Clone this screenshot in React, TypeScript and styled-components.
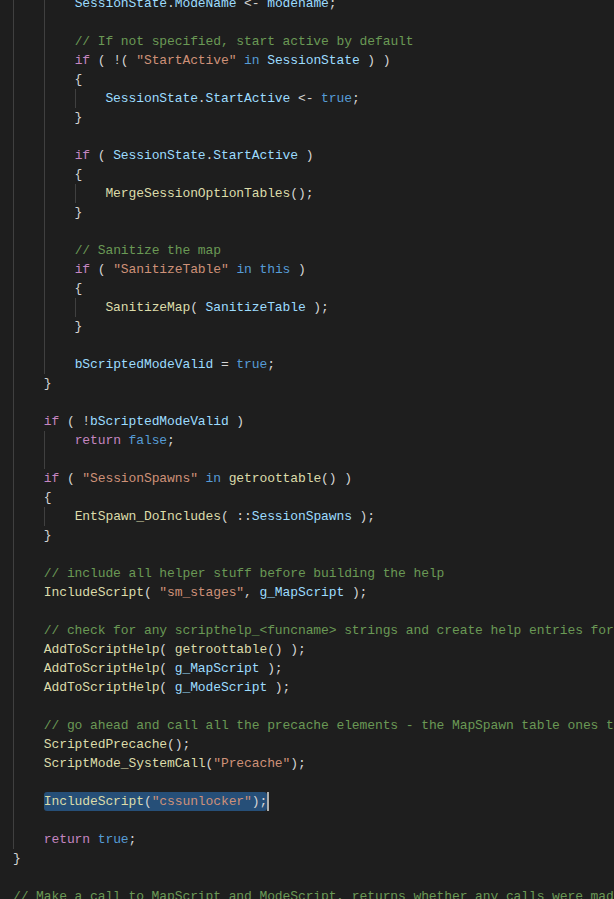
import React from "react";
import styled, { createGlobalStyle } from "styled-components";

const CHAR_W = 7.7;
const GUIDE = "#404040";

const Global = createGlobalStyle`
  html, body {
    margin: 0;
    padding: 0;
    background: #1e1e1e;
    overflow: hidden;
  }
`;

const Editor = styled.div`
  width: 614px;
  height: 899px;
  background: #1e1e1e;
  overflow: hidden;
  font-family: "Liberation Mono", "DejaVu Sans Mono", monospace;
  font-size: 13px;
  letter-spacing: -0.1px;
  color: #d4d4d4;
`;

const Code = styled.div`
  display: flex;
  flex-direction: column;
  margin-top: -6px;
  padding-left: 13px;
`;

const Line = styled.div<{ $guides: number[] }>`
  height: 19px;
  line-height: 19px;
  white-space: pre;
  background: ${(p) =>
    p.$guides.length
      ? p.$guides
          .map(
            (c) =>
              `linear-gradient(${GUIDE}, ${GUIDE}) ${Math.round(c * CHAR_W)}px 0 / 1px 100% no-repeat`
          )
          .join(", ")
      : "none"};
`;

type Kind = "plain" | "comment" | "string" | "control" | "keyword" | "func" | "var";

const COLORS: Record<Kind, string> = {
  plain: "#d4d4d4",
  comment: "#6a9955",
  string: "#ce9178",
  control: "#c586c0",
  keyword: "#569cd6",
  func: "#dcdcaa",
  var: "#9cdcfe",
};

const Tok = styled.span<{ $kind: Kind }>`
  color: ${(p) => COLORS[p.$kind]};
`;

const Selection = styled.span`
  display: inline-block;
  height: 19px;
  line-height: 19px;
  vertical-align: top;
  background: #264f78;
  border-radius: 3px;
`;

const Cursor = styled.span`
  display: inline-block;
  width: 2px;
  height: 19px;
  vertical-align: top;
  background: #aeafad;
`;

const CONTROL = new Set(["if", "return", "else", "while", "for", "foreach"]);
const KEYWORDS = new Set(["in", "this", "true", "false", "null", "local", "function"]);

function tokenize(src: string): { kind: Kind; text: string }[] {
  const out: { kind: Kind; text: string }[] = [];
  let i = 0;
  const push = (kind: Kind, text: string) => {
    const last = out[out.length - 1];
    if (last && last.kind === kind) last.text += text;
    else out.push({ kind, text });
  };
  while (i < src.length) {
    const ch = src[i];
    if (src.startsWith("//", i)) {
      push("comment", src.slice(i));
      break;
    }
    if (ch === '"') {
      let j = i + 1;
      while (j < src.length && src[j] !== '"') j++;
      push("string", src.slice(i, j + 1));
      i = j + 1;
      continue;
    }
    if (/[A-Za-z_]/.test(ch)) {
      let j = i;
      while (j < src.length && /[A-Za-z0-9_]/.test(src[j])) j++;
      const word = src.slice(i, j);
      let kind: Kind = "var";
      if (CONTROL.has(word)) kind = "control";
      else if (KEYWORDS.has(word)) kind = "keyword";
      else if (src[j] === "(") kind = "func";
      push(kind, word);
      i = j;
      continue;
    }
    push("plain", ch);
    i++;
  }
  return out;
}

type LineDef = { text: string; guides: number[]; selected?: boolean };

const L = (text: string, guides: number[], selected = false): LineDef => ({
  text,
  guides,
  selected,
});

const LINES: LineDef[] = [
  L("        SessionState.ModeName <- modename;", [0, 4]),
  L("", [0, 4]),
  L("        // If not specified, start active by default", [0, 4]),
  L('        if ( !( "StartActive" in SessionState ) )', [0, 4]),
  L("        {", [0, 4]),
  L("            SessionState.StartActive <- true;", [0, 4, 8]),
  L("        }", [0, 4]),
  L("", [0, 4]),
  L("        if ( SessionState.StartActive )", [0, 4]),
  L("        {", [0, 4]),
  L("            MergeSessionOptionTables();", [0, 4, 8]),
  L("        }", [0, 4]),
  L("", [0, 4]),
  L("        // Sanitize the map", [0, 4]),
  L('        if ( "SanitizeTable" in this )', [0, 4]),
  L("        {", [0, 4]),
  L("            SanitizeMap( SanitizeTable );", [0, 4, 8]),
  L("        }", [0, 4]),
  L("", [0, 4]),
  L("        bScriptedModeValid = true;", [0, 4]),
  L("    }", [0]),
  L("", [0]),
  L("    if ( !bScriptedModeValid )", [0]),
  L("        return false;", [0, 4]),
  L("", [0, 4]),
  L('    if ( "SessionSpawns" in getroottable() )', [0]),
  L("    {", [0]),
  L("        EntSpawn_DoIncludes( ::SessionSpawns );", [0, 4]),
  L("    }", [0]),
  L("", [0]),
  L("    // include all helper stuff before building the help", [0]),
  L('    IncludeScript( "sm_stages", g_MapScript );', [0]),
  L("", [0]),
  L("    // check for any scripthelp_<funcname> strings and create help entries for them", [0]),
  L("    AddToScriptHelp( getroottable() );", [0]),
  L("    AddToScriptHelp( g_MapScript );", [0]),
  L("    AddToScriptHelp( g_ModeScript );", [0]),
  L("", [0]),
  L("    // go ahead and call all the precache elements - the MapSpawn table ones then the others", [0]),
  L("    ScriptedPrecache();", [0]),
  L('    ScriptMode_SystemCall("Precache");', [0]),
  L("", [0]),
  L('    IncludeScript("cssunlocker");', [0], true),
  L("", [0]),
  L("    return true;", [0]),
  L("}", []),
  L("", []),
  L("// Make a call to MapScript and ModeScript, returns whether any calls were made", []),
];

function Tokens({ text }: { text: string }) {
  return (
    <>
      {tokenize(text).map((t, i) => (
        <Tok key={i} $kind={t.kind}>
          {t.text}
        </Tok>
      ))}
    </>
  );
}

function CodeLine({ def }: { def: LineDef }) {
  if (def.selected) {
    const indent = def.text.match(/^ */)?.[0] ?? "";
    const rest = def.text.slice(indent.length);
    return (
      <Line $guides={def.guides}>
        {indent}
        <Selection>
          <Tokens text={rest} />
        </Selection>
        <Cursor />
      </Line>
    );
  }
  return (
    <Line $guides={def.guides}>
      {def.text ? <Tokens text={def.text} /> : " "}
    </Line>
  );
}

export default function App() {
  return (
    <>
      <Global />
      <Editor>
        <Code>
          {LINES.map((d, i) => (
            <CodeLine key={i} def={d} />
          ))}
        </Code>
      </Editor>
    </>
  );
}
